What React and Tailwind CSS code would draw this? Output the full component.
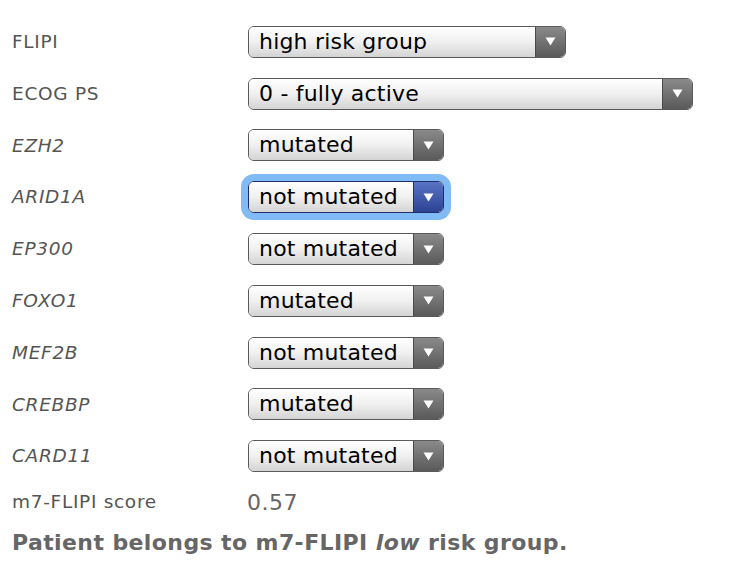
const rows = [
  { label: "FLIPI", value: "high risk group", width: "w-[318px]" },
  { label: "ECOG PS", value: "0 - fully active", width: "w-[445px]" },
  { label: "EZH2", value: "mutated", italic: true },
  { label: "ARID1A", value: "not mutated", italic: true, focused: true },
  { label: "EP300", value: "not mutated", italic: true },
  { label: "FOXO1", value: "mutated", italic: true },
  { label: "MEF2B", value: "not mutated", italic: true },
  { label: "CREBBP", value: "mutated", italic: true },
  { label: "CARD11", value: "not mutated", italic: true },
];

function Arrow() {
  return (
    <svg width="11" height="9" viewBox="0 0 11 9">
      <path d="M0.5 0.5 L10.5 0.5 L5.5 8.5 Z" fill="#fff" />
    </svg>
  );
}

function Select({ value, width = "w-[196px]", focused }) {
  return (
    <div
      className={`${width} h-[32px] flex rounded-[6px] border overflow-hidden ${
        focused
          ? "border-[#1f2f6e] shadow-[0_0_0_7px_#80bbf6]"
          : "border-[#5a5a5a]"
      }`}
    >
      <div className="flex-1 flex items-center pl-[10px] bg-gradient-to-b from-[#ffffff] via-[#f0f0f0] to-[#d4d4d4] text-[22px] tracking-[0.2px] text-black leading-none">
        {value}
      </div>
      <div
        className={`w-[30px] flex items-center justify-center border-l ${
          focused
            ? "border-[#1f2f6e] bg-gradient-to-b from-[#5a74c4] to-[#2c4394]"
            : "border-[#4a4a4a] bg-gradient-to-b from-[#8a8a8a] to-[#5a5a5a]"
        }`}
      >
        <Arrow />
      </div>
    </div>
  );
}

export default function App() {
  return (
    <div
      className="min-h-screen bg-white pl-[12px] pt-[16px]"
      style={{ fontFamily: '"DejaVu Sans", Verdana, sans-serif' }}
    >
      {rows.map((r) => (
        <div key={r.label} className="h-[51.8px] flex items-center">
          <div
            className={`w-[236px] text-[18.5px] tracking-[0.7px] text-[#555] ${
              r.italic ? "italic" : ""
            }`}
          >
            {r.label}
          </div>
          <Select value={r.value} width={r.width} focused={r.focused} />
        </div>
      ))}
      <div className="flex items-center h-[30px] mt-[5px]">
        <div className="w-[235px] text-[18.5px] tracking-[0.7px] text-[#555]">
          m7-FLIPI score
        </div>
        <div className="text-[22px] tracking-[0.5px] text-[#666]">0.57</div>
      </div>
      <div className="mt-[9px] text-[22px] tracking-[0.4px] font-bold text-[#666]">
        Patient belongs to m7-FLIPI <i>low</i> risk group.
      </div>
    </div>
  );
}
